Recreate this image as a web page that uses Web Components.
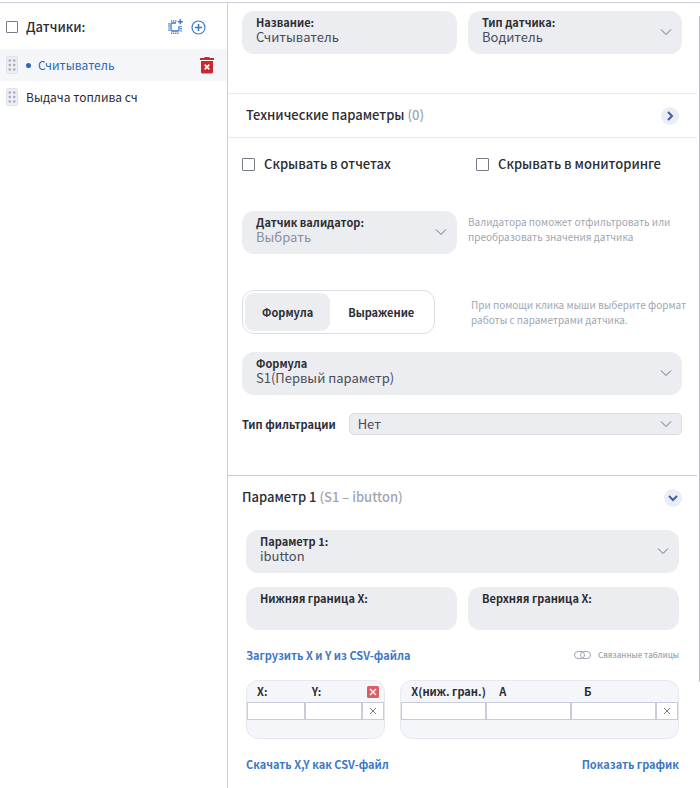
<!DOCTYPE html>
<html lang="ru">
<head>
<meta charset="utf-8">
<meta name="viewport" content="width=device-width, initial-scale=1">
<title>Датчики</title>
<style>
    :root {
        --text: #2c2d33;
        --value: #4a4c55;
        --muted: #a0a6b2;
        --blue: #3d78c6;
        --field: #ecedf1;
        --line: #c9ced9;
        --line-soft: #e6e9ef;
    }

    body {
        margin: 0;
        background: #fff;
        color: var(--text);
        font: 12px/16px "Noto Sans CJK SC", "Noto Sans", sans-serif;
    }
</style>
</head>
<body>

<sensor-app>
    <sensor-list slot="lista" heading="Датчики:">
        <sensor-item active>Считыватель</sensor-item>
        <sensor-item>Выдача топлива сч</sensor-item>
    </sensor-list>

    <panel-section kind="top">
        <form-row>
            <form-field label="Название:" value="Считыватель"></form-field>
            <form-field label="Тип датчика:" value="Водитель" select></form-field>
        </form-row>
    </panel-section>

    <panel-header kind="soft" heading="Технические параметры" note="(0)"></panel-header>

    <panel-section kind="main">
        <form-row kind="checks">
            <check-box label="Скрывать в отчетах"></check-box>
            <check-box label="Скрывать в мониторинге"></check-box>
        </form-row>
        <form-row kind="validator">
            <form-field label="Датчик валидатор:" value="Выбрать" select empty></form-field>
            <hint-text>Валидатора поможет отфильтровать или преобразовать значения датчика</hint-text>
        </form-row>
        <form-row kind="format">
            <toggle-group options="Формула,Выражение"></toggle-group>
            <hint-text>При помощи клика мыши выберите формат работы с параметрами датчика.</hint-text>
        </form-row>
        <form-field label="Формула" value="S1(Первый параметр)" select></form-field>
        <filter-select label="Тип фильтрации" value="Нет"></filter-select>
    </panel-section>

    <panel-header kind="open" heading="Параметр 1" note="(S1 – ibutton)"></panel-header>

    <panel-section kind="param">
        <form-field label="Параметр 1:" value="ibutton" select></form-field>
        <form-row kind="limits">
            <form-field label="Нижняя граница X:" value=""></form-field>
            <form-field label="Верхняя граница X:" value=""></form-field>
        </form-row>
        <link-row>
            <a slot="inicio" href="#upload">Загрузить X и Y из CSV-файла</a>
            <linked-tables>Связанные таблицы</linked-tables>
        </link-row>
        <form-row kind="tables">
            <value-table columns="X:,Y:" clearable></value-table>
            <value-table columns="X(ниж. гран.),А,Б"></value-table>
        </form-row>
        <link-row>
            <a slot="inicio" href="#download">Скачать X,Y как CSV-файл</a>
            <a href="#chart">Показать график</a>
        </link-row>
    </panel-section>
</sensor-app>

<script>

const CHEVRON = `<svg class="chevron" width="12" height="8" viewBox="0 0 12 8" fill="none" stroke="#6d707a" aria-hidden="true"><path d="M1 1.5 6 6.5 11 1.5"/></svg>`;

// Base: monta la plantilla en el shadow root
class Elemento extends HTMLElement {
    constructor() {
        super();
        this.attachShadow({ mode: 'open' });
    }

    connectedCallback() {
        this.shadowRoot.innerHTML = `
            <style>
                *, *::before { box-sizing: border-box; }
                button, input, select { font: inherit; color: inherit; margin: 0; }
                button { border: 0; padding: 0; background: none; cursor: pointer; }
                svg { display: block; }
            </style>
            ${this.render()}`;
    }

    attr(nombre) { return this.getAttribute(nombre) || ""; }
}


customElements.define("sensor-app", class extends Elemento {
    render() {
        return `
            <style>
                :host {
                    display: grid;
                    box-sizing: border-box;
                    grid-template-columns: 228px minmax(0, 1fr) 1px;
                    min-height: calc(100vh - 2px);
                    margin-top: 2px;
                    border-top: 1px solid var(--line);
                }
                aside { border-right: 1px solid var(--line); }
                main { margin-right: 2px; }
                .barra { background: #b9bbc0; margin: 13px 0 106px; }
            </style>
            <aside><slot name="lista"></slot></aside>
            <main><slot></slot></main>
            <div class="barra"></div>`;
    }
});


customElements.define("sensor-list", class extends Elemento {
    render() {
        return `
            <style>
                :host { display: block; }
                header {
                    display: flex;
                    align-items: center;
                    height: 46px;
                    padding: 2px 21px 0 6px;
                }
                label { display: flex; align-items: center; gap: 8px; font-size: 13px; font-weight: 500; flex: 1; }
                input { appearance: none; width: 12px; height: 12px; border: 1px solid #777b88; border-radius: 1px; }
                .botones { display: flex; gap: 8px; color: var(--blue); }
            </style>
            <header>
                <label><input type="checkbox">${this.attr("heading")}</label>
                <div class="botones">
                    <button aria-label="Копировать">
                        <svg width="16" height="16" viewBox="0 0 16 16" fill="none" stroke="currentColor">
                            <path d="M9 4H5a1 1 0 0 0-1 1v6a1 1 0 0 0 1 1h6a1 1 0 0 0 1-1V7" stroke-width="1.3"/>
                            <path d="M4 2h5.5M2 4.2v8M4 14.2h8M14 7v5.5" stroke-width="1.6" stroke-dasharray="1.2 .9"/>
                            <path d="M13.3 .3v5M10.8 2.8h5" stroke-width="1.5"/>
                        </svg>
                    </button>
                    <button aria-label="Добавить">
                        <svg width="15" height="15" viewBox="0 0 15 15" fill="none" stroke="currentColor">
                            <circle cx="7.5" cy="7.5" r="6.5" stroke-width="1.2"/>
                            <path d="M7.5 4v7M4 7.5h7" stroke-width="1.6"/>
                        </svg>
                    </button>
                </div>
            </header>
            <slot></slot>`;
    }
});


customElements.define("sensor-item", class extends Elemento {
    render() {
        const activo = this.hasAttribute("active");
        return `
            <style>
                :host { display: flex; align-items: center; height: 32px; padding: 0 13px 0 6px; gap: 8px; }
                :host([active]) { background: #f4f6fa; color: #2f66b5; }
                .texto { flex: 1; display: flex; align-items: center; gap: 7px; }
                .punto { width: 5px; height: 5px; border-radius: 50%; background: currentColor; }
            </style>
            <svg width="12" height="18" viewBox="0 0 12 18" aria-hidden="true">
                <rect x=".5" y=".5" width="11" height="17" rx="2" fill="#eceef3" stroke="#dfe2ea"/>
                <g fill="#a3a8b8">
                    <circle cx="3.8" cy="4.5" r="1.2"/><circle cx="8.2" cy="4.5" r="1.2"/>
                    <circle cx="3.8" cy="9" r="1.2"/><circle cx="8.2" cy="9" r="1.2"/>
                    <circle cx="3.8" cy="13.5" r="1.2"/><circle cx="8.2" cy="13.5" r="1.2"/>
                </g>
            </svg>
            <div class="texto">${activo ? '<i class="punto"></i>' : ''}<span><slot></slot></span></div>
            ${activo ? `
            <button aria-label="Удалить">
                <svg width="14" height="17" viewBox="0 0 14 17">
                    <path d="M4.5 0h5v1H14v2H0V1h4.5zM1 4h12v11a1.5 1.5 0 0 1-1.5 1.5h-9A1.5 1.5 0 0 1 1 15z" fill="#c9282d"/>
                    <path d="M4.7 7.7l4.6 4.6M9.3 7.7l-4.6 4.6" stroke="#fff" stroke-width="1.7"/>
                </svg>
            </button>` : ''}`;
    }
});


customElements.define("panel-section", class extends Elemento {
    render() {
        return `
            <style>
                :host { display: flex; flex-direction: column; }
                :host([kind=top]) { padding: 8px 15px 39px 14px; }
                :host([kind=main]) { padding: 18px 15px 40px 14px; gap: 18px; }
                :host([kind=param]) { padding: 11px 18px 8px; gap: 14px; }
            </style>
            <slot></slot>`;
    }
});


customElements.define("panel-header", class extends Elemento {
    render() {
        const abierto = this.attr("kind") == "open";
        return `
            <style>
                :host {
                    display: flex;
                    justify-content: space-between;
                    align-items: center;
                    height: 45px;
                    box-sizing: border-box;
                    padding: 0 18px;
                    border: 1px solid var(--line-soft);
                    border-width: 1px 0;
                }
                :host([kind=open]) { height: 44px; padding: 0 15px 0 14px; border-color: var(--line); border-bottom: 0; }
                h2 { margin: 0; padding-bottom: 2px; font-size: 13px; font-weight: 500; }
                small { font-size: 13px; color: var(--muted); }
                button { display: grid; place-items: center; width: 18px; height: 18px; border-radius: 50%; background: #e9edf5; }
                .abierto { transform: rotate(90deg); }
            </style>
            <h2>${this.attr("heading")} <small>${this.attr("note")}</small></h2>
            <button aria-label="Показать" aria-expanded="${abierto}">
                <svg class="${abierto ? "abierto" : ""}" width="10" height="10" viewBox="0 0 10 10" fill="none" stroke="#3f5f9f" stroke-width="2"><path d="M3 1l4 4-4 4"/></svg>
            </button>`;
    }
});


customElements.define("form-row", class extends Elemento {
    render() {
        return `
            <style>
                :host { display: grid; grid-template-columns: 215fr 214fr; column-gap: 11px; align-items: center; }
                :host([kind=checks]) { grid-template-columns: 1fr 1fr; column-gap: 28px; height: 16px; }
                :host([kind=validator]) { margin-top: 21px; }
                :host([kind=validator]) ::slotted(hint-text) { margin-bottom: 8px; }
                /* the hint runs a little into the section's right padding */
                :host([kind=format]) { margin: 18px -12px 0 0; grid-template-columns: auto 223px; justify-content: space-between; }
                :host([kind=limits]) { grid-template-columns: 1fr 1fr; }
                :host([kind=tables]) { grid-template-columns: 1fr 2fr; column-gap: 15px; }
            </style>
            <slot></slot>`;
    }
});


customElements.define("form-field", class extends Elemento {
    render() {
        const select = this.hasAttribute("select");
        const valor = this.attr("value");
        return `
            <style>
                :host { display: block; background: var(--field); border-radius: 12px; }
                .campo { display: grid; grid-template-columns: minmax(0, 1fr) 12px; height: 43px; padding: 3px 10px 0 14px; }
                label { grid-area: 1 / 1; align-self: start; font-size: 11px; line-height: 16px; font-weight: 700; }
                input, select {
                    grid-area: 1 / 1 / 2 / 3;
                    align-self: end;
                    appearance: none;
                    width: 100%;
                    height: 20px;
                    margin-bottom: 7px;
                    border: 0;
                    padding: 0;
                    background: none;
                    outline: 0;
                    font-size: 13px;
                    color: var(--value);
                }
                input { margin-bottom: 8px; }
                :host([empty]) select { color: #8b8f9c; }
                .chevron { grid-area: 1 / 2; align-self: center; margin-bottom: 4px; pointer-events: none; }
            </style>
            <div class="campo">
                <label for="c">${this.attr("label")}</label>
                ${select
                    ? `<select id="c"><option>${valor}</option></select>${CHEVRON}`
                    : `<input id="c" type="text" value="${valor}">`}
            </div>`;
    }
});


customElements.define("check-box", class extends Elemento {
    render() {
        return `
            <style>
                :host { display: block; }
                label { display: flex; align-items: center; gap: 9px; font-size: 13px; font-weight: 500; }
                input { appearance: none; width: 13px; height: 13px; border: 1px solid #777b88; border-radius: 1px; }
            </style>
            <label><input type="checkbox">${this.attr("label")}</label>`;
    }
});


customElements.define("hint-text", class extends Elemento {
    render() {
        return `
            <style>
                :host { display: block; font-size: 10px; line-height: 15px; color: var(--muted); }
            </style>
            <slot></slot>`;
    }
});


customElements.define("toggle-group", class extends Elemento {
    render() {
        const opciones = this.attr("options").split(",");
        return `
            <style>
                :host { display: flex; height: 44px; box-sizing: border-box; padding: 2px; border: 1px solid #dcdee4; border-radius: 12px; }
                button { padding: 0 17px; border-radius: 9px; font-size: 11px; font-weight: 700; }
                button + button { padding: 0 18px; }
                button[aria-pressed=true] { background: var(--field); }
            </style>
            ${opciones.map((o, i) => `<button aria-pressed="${i == 0}">${o}</button>`).join("")}`;
    }
});


customElements.define("filter-select", class extends Elemento {
    render() {
        return `
            <style>
                :host { display: flex; align-items: center; gap: 13px; }
                label { font-size: 11px; font-weight: 700; }
                .caja {
                    flex: 1;
                    display: grid;
                    grid-template-columns: minmax(0, 1fr) 12px;
                    align-items: center;
                    height: 22px;
                    padding: 0 9px 0 8px;
                    border: 1px solid #d9dce3;
                    border-radius: 5px;
                    background: var(--field);
                }
                select { grid-area: 1 / 1 / 2 / 3; appearance: none; width: 100%; height: 20px; border: 0; padding: 0; background: none; font-size: 13px; color: var(--value); }
                .chevron { grid-area: 1 / 2; pointer-events: none; }
            </style>
            <label for="f">${this.attr("label")}</label>
            <div class="caja"><select id="f"><option>${this.attr("value")}</option></select>${CHEVRON}</div>`;
    }
});


customElements.define("link-row", class extends Elemento {
    render() {
        return `
            <style>
                :host { display: flex; justify-content: space-between; align-items: center; box-sizing: border-box; height: 22px; padding-bottom: 1px; }
                ::slotted(a) { color: var(--blue); font-size: 11px; font-weight: 700; text-decoration: none; }
            </style>
            <slot name="inicio"></slot>
            <slot></slot>`;
    }
});


customElements.define("linked-tables", class extends Elemento {
    render() {
        return `
            <style>
                :host { display: block; }
                button { display: flex; align-items: center; gap: 7px; font-size: 8px; font-weight: 500; color: var(--muted); }
            </style>
            <button>
                <svg width="17" height="8" viewBox="0 0 17 8" fill="none" stroke="currentColor">
                    <rect x=".5" y=".5" width="10" height="7" rx="3.5"/>
                    <rect x="6.5" y=".5" width="10" height="7" rx="3.5"/>
                </svg>
                <slot></slot>
            </button>`;
    }
});


customElements.define("value-table", class extends Elemento {
    render() {
        const columnas = this.attr("columns").split(",");
        const borrar = `
            <button class="borrar" aria-label="Очистить">
                <svg width="12" height="12" viewBox="0 0 12 12"><rect width="12" height="12" rx="1.5" fill="#dc5d63"/><path d="M3 3l6 6M9 3L3 9" stroke="#fff" stroke-width="1.4"/></svg>
            </button>`;
        return `
            <style>
                :host { display: block; padding-bottom: 18px; border: 1px solid #e5e8f0; border-radius: 12px; background: #f5f6fa; }
                table { width: 100%; table-layout: fixed; border-collapse: separate; border-spacing: 0; }
                th { height: 21px; padding: 0 0 1px 10px; font-size: 11px; font-weight: 700; text-align: left; white-space: nowrap; }
                th + th { padding-left: 13px; }
                :host([clearable]) th + th { padding-left: 7px; }
                th:last-child, :host([clearable]) th:last-child { width: 22px; padding: 0; }
                td { height: 18px; padding: 0; border: 1px solid #c8ccda; background: #fff; }
                input { display: block; width: 100%; height: 16px; border: 0; padding: 0 4px; background: none; outline: 0; }
                button { display: block; margin: 0 auto; }
            </style>
            <table>
                <thead>
                    <tr>${columnas.map(c => `<th scope="col">${c}</th>`).join("")}<th>${this.hasAttribute("clearable") ? borrar : ""}</th></tr>
                </thead>
                <tbody>
                    <tr>
                        ${columnas.map(c => `<td><input type="text" aria-label="${c}"></td>`).join("")}
                        <td><button aria-label="Удалить строку"><svg width="8" height="8" viewBox="0 0 8 8" fill="none" stroke="#777a84"><path d="M1 1l6 6M7 1L1 7"/></svg></button></td>
                    </tr>
                </tbody>
            </table>`;
    }
});

</script>
</body>
</html>
